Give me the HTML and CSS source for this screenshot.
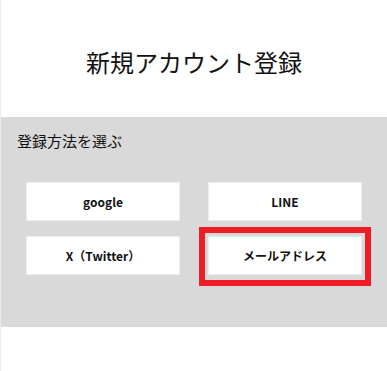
FILE: index.html
```html
<!DOCTYPE html>
<html lang="ja">
<head>
    <meta charset="UTF-8">
    <meta name="viewport" content="width=device-width, initial-scale=1.0">
    <title>新規アカウント登録</title>
    <link rel="stylesheet" href="styles.css">
</head>
<body>
    <div class="page">
        <!-- ヘッダー -->
        <header class="page-header">
            <h1>新規アカウント登録</h1>
        </header>

        <!-- 登録方法 -->
        <section class="method">
            <h2>登録方法を選ぶ</h2>
            <div class="method-list">
                <button class="method-btn">google</button>
                <button class="method-btn">LINE</button>
                <button class="method-btn">X（Twitter）</button>
                <button class="method-btn selected">メールアドレス</button>
            </div>
        </section>
    </div>
</body>
</html>
```

FILE: styles.css
```css
/* Reset */
* {
    margin: 0;
    padding: 0;
    box-sizing: border-box;
}

body {
    font-family: "Noto Sans CJK JP", "Noto Sans", sans-serif;
    background: #fff;
    color: #111;
}

.page {
    min-height: 371px;
    border-left: 1px solid #ebebf3;
}

.page-header {
    height: 117px;
    display: flex;
    align-items: center;
    justify-content: center;
    padding-top: 7px;
}

.page-header h1 {
    font-size: 24px;
    font-weight: 400;
    line-height: 1.4;
}

.method {
    height: 210px;
    background: #d9d9d9;
    padding: 13px 0 0 16px;
}

.method h2 {
    font-size: 15px;
    font-weight: 400;
    line-height: 22px;
}

.method-list {
    display: grid;
    grid-template-columns: 154px 154px;
    column-gap: 28px;
    row-gap: 15px;
    margin: 30px 0 0 9px;
}

.method-btn {
    position: relative;
    height: 39px;
    background: #fff;
    border: 1px solid #ececec;
    font-family: inherit;
    font-size: 12px;
    font-weight: 700;
    color: #111;
    cursor: pointer;
}

/* 選択中の枠 */
.method-btn.selected::after {
    content: "";
    position: absolute;
    top: -10px;
    left: -10px;
    right: -10px;
    bottom: -12px;
    border: 6px solid #ee1c25;
}
```
